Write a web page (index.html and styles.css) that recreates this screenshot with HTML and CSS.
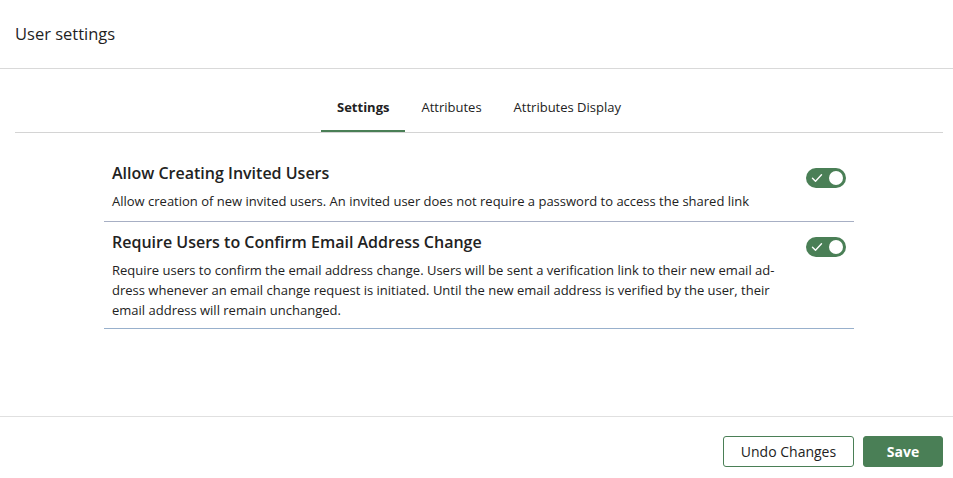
FILE: index.html
```html
<!DOCTYPE html>
<html lang="en">
<head>
    <meta charset="UTF-8">
    <meta name="viewport" content="width=device-width, initial-scale=1.0">
    <title>User settings</title>
    <link rel="stylesheet" href="styles.css">
</head>
<body>
    <div class="dialog">
        <!-- En-tête -->
        <header class="dialog-header">
            <h1 class="dialog-title">User settings</h1>
        </header>

        <div class="dialog-body">
            <nav class="tabs">
                <div class="tab active">Settings</div>
                <div class="tab">Attributes</div>
                <div class="tab">Attributes Display</div>
            </nav>

            <div class="settings-list">
                <div class="setting-row first">
                    <div class="setting-text">
                        <div class="setting-name">Allow Creating Invited Users</div>
                        <div class="setting-desc">Allow creation of new invited users. An invited user does not require a password to access the shared link</div>
                    </div>
                    <div class="toggle on">
                        <svg class="toggle-check" width="12" height="12" viewBox="0 0 12 12"><path d="M1.5 6.3 L4.5 9.2 L10.5 2.8" fill="none" stroke="#fff" stroke-width="1.4" stroke-linecap="round" stroke-linejoin="round"/></svg>
                        <span class="toggle-knob"></span>
                    </div>
                </div>

                <div class="setting-row last">
                    <div class="setting-text">
                        <div class="setting-name">Require Users to Confirm Email Address Change</div>
                        <div class="setting-desc">Require users to confirm the email address change. Users will be sent a verification link to their new email ad&shy;dress whenever an email change request is initiated. Until the new email address is verified by the user, their email address will remain unchanged.</div>
                    </div>
                    <div class="toggle on">
                        <svg class="toggle-check" width="12" height="12" viewBox="0 0 12 12"><path d="M1.5 6.3 L4.5 9.2 L10.5 2.8" fill="none" stroke="#fff" stroke-width="1.4" stroke-linecap="round" stroke-linejoin="round"/></svg>
                        <span class="toggle-knob"></span>
                    </div>
                </div>
            </div>
        </div>

        <footer class="dialog-footer">
            <button class="btn btn-outline">Undo Changes</button>
            <button class="btn btn-primary">Save</button>
        </footer>
    </div>
</body>
</html>
```

FILE: styles.css
```css
* {
    margin: 0;
    padding: 0;
    box-sizing: border-box;
}

body {
    background-color: #fff;
    font-family: 'Open Sans', 'Noto Sans', sans-serif;
    color: #222;
}

.dialog {
    display: flex;
    flex-direction: column;
    width: 953px;
    height: 478px;
}

/* Header */
.dialog-header {
    height: 69px;
    display: flex;
    align-items: center;
    padding: 0 15px 1px;
    border-bottom: 1px solid #d9d9d9;
}

.dialog-title {
    font-size: 16.5px;
    font-weight: 400;
    color: #1f1f1f;
}

.dialog-body {
    flex: 1;
    padding: 15px 10px 0 15px;
}

/* Tabs */
.tabs {
    display: flex;
    justify-content: center;
    border-bottom: 1px solid #d4d4d4;
}

.tab {
    font-size: 13px;
    line-height: 18px;
    padding: 14px 16px 14px;
    border-bottom: 2px solid transparent;
    color: #222;
    cursor: pointer;
}

.tab.active {
    font-weight: 700;
    border-bottom-color: #4a7f56;
}

/* Settings rows */
.settings-list {
    max-width: 750px;
    margin: 19px auto 0;
}

.setting-row {
    display: flex;
    gap: 16px;
    padding: 10px 8px 10px;
    border-bottom: 1px solid #a7afc4;
}

.setting-row.last {
    padding-top: 9px;
    padding-bottom: 8px;
    border-bottom-color: #98b0cc;
}

.setting-text {
    flex: 1;
}

.setting-name {
    font-size: 16px;
    font-weight: 600;
    line-height: 22px;
    margin-bottom: 7px;
    color: #222;
}

.setting-desc {
    font-size: 13px;
    line-height: 20px;
    color: #222;
}

/* Toggle */
.toggle {
    position: relative;
    flex: none;
    width: 40px;
    height: 20px;
    margin-top: 6px;
    border-radius: 10px;
    background-color: #4a7f56;
}

.toggle-check {
    position: absolute;
    left: 5px;
    top: 4px;
}

.toggle-knob {
    position: absolute;
    top: 3px;
    right: 3px;
    width: 14px;
    height: 14px;
    border-radius: 50%;
    background-color: #fff;
}

/* Footer */
.dialog-footer {
    display: flex;
    justify-content: flex-end;
    gap: 9px;
    padding: 19px 10px 10px;
    border-top: 1px solid #e0e0e0;
    height: 62px;
}

.btn {
    height: 31px;
    padding: 0 16px;
    border-radius: 3px;
    font-family: 'Open Sans', 'Noto Sans', sans-serif;
    font-size: 14px;
    cursor: pointer;
}

.btn-outline {
    width: 131px;
    background: #fff;
    color: #222;
    border: 1px solid #4a7f56;
}

.btn-primary {
    width: 80px;
    background: #4a7f56;
    color: #fff;
    font-weight: 700;
    border: 1px solid #4a7f56;
}
```
